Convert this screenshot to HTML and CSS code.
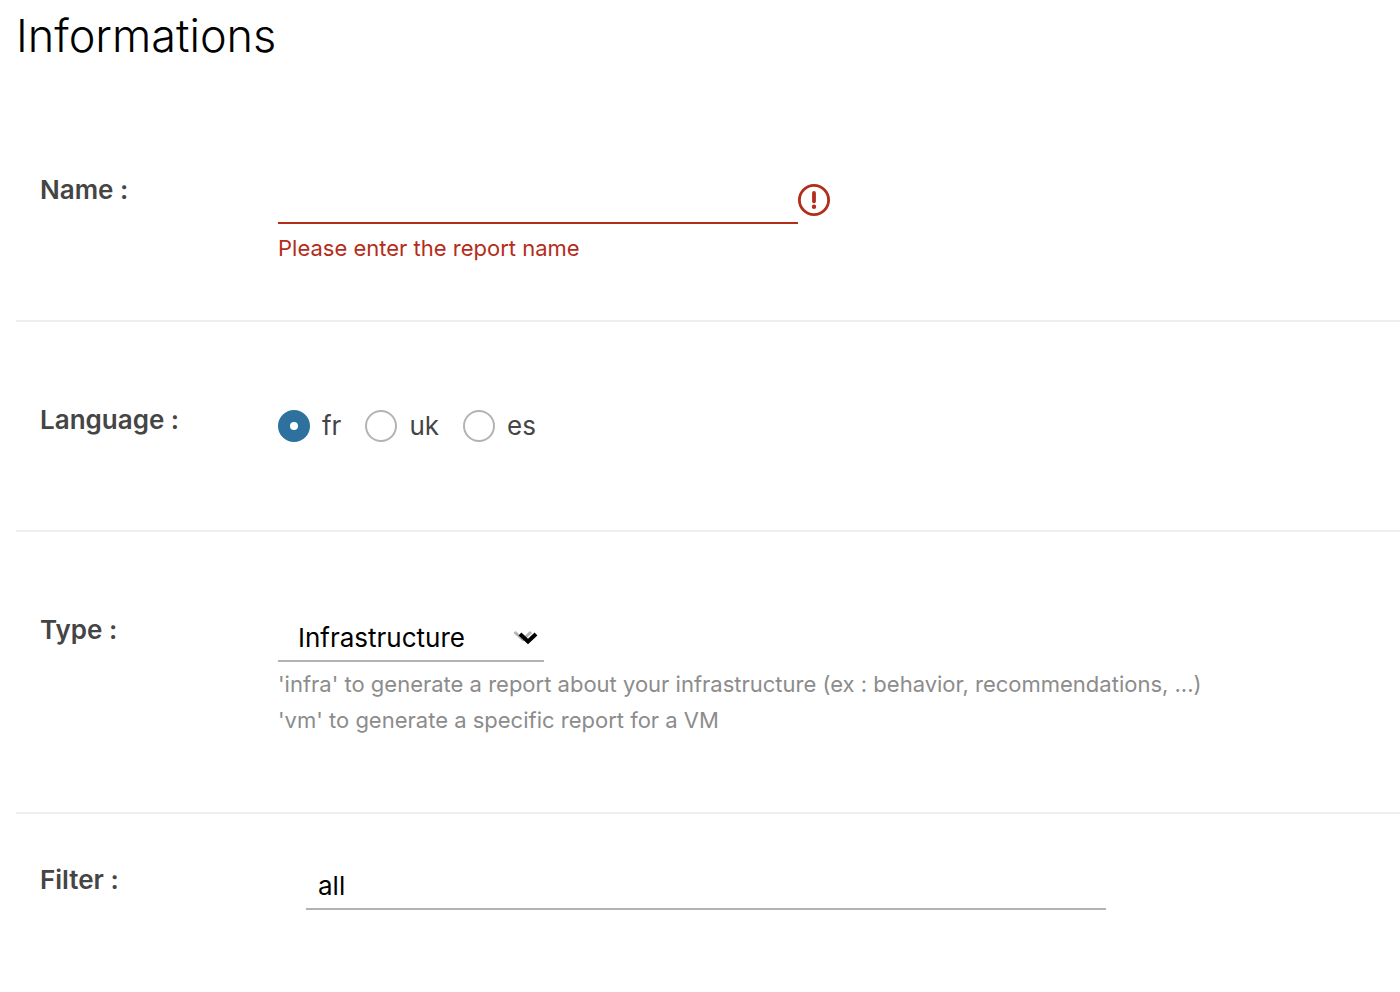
FILE: index.html
```
<!DOCTYPE html>
<html lang="en">
  <head>
    <meta charset="UTF-8" />
    <meta name="viewport" content="width=device-width, initial-scale=1.0" />
    <title>Informations</title>
    <link rel="stylesheet" href="styles.css">
  </head>

  <body>
    <h1>Informations</h1>
    <form class="report-form">
      <div class="form-row">
        <label class="row-label" for="name">Name :</label>
        <div class="control">
          <div class="input-line">
            <input type="text" id="name" class="text-input invalid" aria-describedby="nameError" />
            <svg class="error-icon" viewBox="0 0 32 32" aria-hidden="true">
              <circle cx="16" cy="16" r="14.600" />
              <path d="M16 8.900v8.400" />
              <circle class="dot" cx="16" cy="22.800" r="2.200" />
            </svg>
          </div>
          <p class="hint error" id="nameError">Please enter the report name</p>
        </div>
      </div>

      <div class="form-row" role="radiogroup" aria-labelledby="languageLabel">
        <span class="row-label" id="languageLabel">Language :</span>
        <div class="control radios">
          <label class="radio"><input type="radio" name="language" value="fr" checked />fr</label>
          <label class="radio"><input type="radio" name="language" value="uk" />uk</label>
          <label class="radio"><input type="radio" name="language" value="es" />es</label>
        </div>
      </div>

      <div class="form-row tall">
        <label class="row-label" for="type">Type :</label>
        <div class="control">
          <div class="select-wrap">
            <select id="type" name="type">
              <option value="infra">Infrastructure</option>
              <option value="vm">VM</option>
            </select>
            <svg class="caret" viewBox="0 0 26 16" aria-hidden="true">
              <path class="caret-back" d="M1.500 2l8.500 7.500 8-7.500" />
              <path class="caret-front" d="M7 4l8 7.500 8-7.500" />
            </svg>
          </div>
          <p class="hint">'infra' to generate a report about your infrastructure (ex : behavior, recommendations, ...)</p>
          <p class="hint">'vm' to generate a specific report for a VM</p>
        </div>
      </div>

      <div class="form-row compact">
        <label class="row-label" for="filter">Filter :</label>
        <div class="control indented">
          <input type="text" id="filter" class="text-input wide" value="all" />
        </div>
      </div>
    </form>
  </body>
</html>
```
FILE: styles.css
```
* {
  box-sizing: border-box;
}

body {
  margin: 0;
  padding: 12px 0 0 16px;
  background: #fff;
  color: #454545;
  font-family: Inter, "Open Sans", sans-serif;
  font-size: 26px;
  line-height: 36px;
}

h1 {
  margin: 0 0 32px;
  color: #000;
  font-size: 45px;
  font-weight: 300;
  line-height: 48px;
}

.form-row {
  display: grid;
  grid-template-columns: 238px 1fr;
  align-items: start;
  padding: 80px 0 80px 24px;
  border-bottom: 2px solid #eee;
}

.form-row:first-child {
  padding-bottom: 54px;
}

.form-row:nth-child(2) {
  padding-bottom: 82px;
}

.form-row.tall {
  padding-bottom: 74px;
}

.form-row.compact {
  padding: 48px 0 48px 24px;
  border-bottom: none;
}

.row-label {
  font-weight: 600;
}

.control {
  padding-top: 4px;
}

.control.indented {
  padding: 0 0 0 28px;
}

.input-line {
  display: flex;
  align-items: center;
}

.text-input,
select {
  height: 48px;
  padding: 0 12px;
  border: none;
  border-bottom: 2px solid #b3b3b3;
  border-radius: 0;
  background: transparent;
  color: #000;
  font: inherit;
  outline: none;
}

.text-input {
  width: 100%;
  max-width: 520px;
}

.text-input.wide {
  display: block;
  max-width: 800px;
}

.text-input.invalid {
  border-color: #b32d1b;
}

.error-icon {
  flex: none;
  width: 32px;
  height: 32px;
  fill: none;
  stroke: #b32d1b;
  stroke-width: 2.8;
}

.error-icon path {
  stroke-width: 3.8;
  stroke-linecap: round;
}

.error-icon .dot {
  fill: #b32d1b;
  stroke: none;
}

.hint {
  margin: 0;
  color: #8c8c8c;
  font-size: 22px;
}

.hint:first-of-type {
  margin-top: 4px;
}

.hint.error {
  color: #b32d1b;
  margin-top: 6px;
}

.radios {
  display: flex;
  gap: 24px;
  padding: 6px 0 4px;
}

.radio {
  display: flex;
  align-items: center;
  gap: 12px;
}

.radio input {
  appearance: none;
  width: 32px;
  height: 32px;
  margin: 0;
  border: 2px solid #b3b3b3;
  border-radius: 50%;
  background: #fff;
}

.radio input:checked {
  border: 12px solid #2e719f;
}

.select-wrap {
  position: relative;
  width: 266px;
}

select {
  appearance: none;
  display: block;
  width: 100%;
  height: 46px;
  padding: 0 20px;
}

/* the caret lies over the select */
.caret {
  position: absolute;
  right: 5px;
  top: 14px;
  width: 26px;
  height: 16px;
  fill: none;
  pointer-events: none;
}

.caret-back {
  stroke: #b3b3b3;
  stroke-width: 3;
}

.caret-front {
  stroke: #000;
  stroke-width: 4;
}
```
